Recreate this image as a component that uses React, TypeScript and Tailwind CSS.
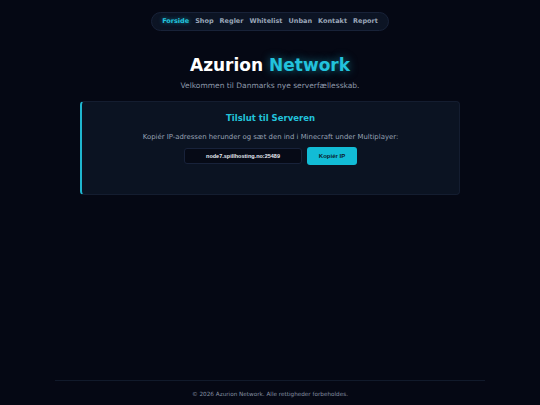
export default function App() {
  const links = ["Forside", "Shop", "Regler", "Whitelist", "Unban", "Kontakt", "Report"];
  return (
    <div className="flex min-h-[405px] w-[540px] flex-col bg-[#050814] font-['DejaVu_Sans',sans-serif] text-white">
      <nav className="flex justify-center pt-3">
        <div className="flex h-[19px] items-center gap-[6px] rounded-full border border-[#182238] bg-[#0c1424] px-[10px]">
          {links.map((l, i) => (
            <span
              key={l}
              className={`text-[6.5px] font-bold ${
                i === 0 ? "text-[#22c3dc] [text-shadow:0_0_4px_rgba(34,195,220,0.6)]" : "text-[#9aa6b8]"
              }`}
            >
              {l}
            </span>
          ))}
        </div>
      </nav>

      <header className="mt-[26px] flex flex-col items-center">
        <h1 className="text-[17px] font-bold leading-none">
          Azurion{" "}
          <span className="text-[#22c3dc] [text-shadow:0_0_8px_rgba(34,195,220,0.55)]">Network</span>
        </h1>
        <p className="mt-[6px] text-[7.5px] text-[#8e99ab]">Velkommen til Danmarks nye serverfællesskab.</p>
      </header>

      <section className="mx-auto mt-[10px] flex h-[94px] w-[380px] flex-col items-center rounded-[4px] border border-l-2 border-[#141d30] border-l-[#1fb6cf] bg-[#0b1322] pt-[10px]">
        <h2 className="text-[8.5px] font-bold text-[#22c3dc]">Tilslut til Serveren</h2>
        <p className="mt-[7px] text-[6.9px] text-[#97a2b4]">
          Kopiér IP-adressen herunder og sæt den ind i Minecraft under Multiplayer:
        </p>
        <div className="mt-[5px] flex items-center gap-[5px]">
          <div className="flex h-[16px] w-[118px] items-center justify-center rounded-[3px] border border-[#18223a] bg-[#060a16] font-['Liberation_Sans',sans-serif] text-[5.5px] font-bold text-[#e6ebf2]">
            node7.spillhosting.no:25489
          </div>
          <button className="h-[18px] w-[50px] rounded-[3px] bg-[#12bcd6] font-['Liberation_Sans',sans-serif] text-[6px] font-bold text-[#0a1a2a]">
            Kopiér IP
          </button>
        </div>
      </section>

      <footer className="mx-[55px] mt-auto mb-[6px] border-t border-[#111a2b] pt-[9px] text-center text-[5.7px] text-[#8590a2]">
        © 2026 Azurion Network. Alle rettigheder forbeholdes.
      </footer>
    </div>
  );
}
